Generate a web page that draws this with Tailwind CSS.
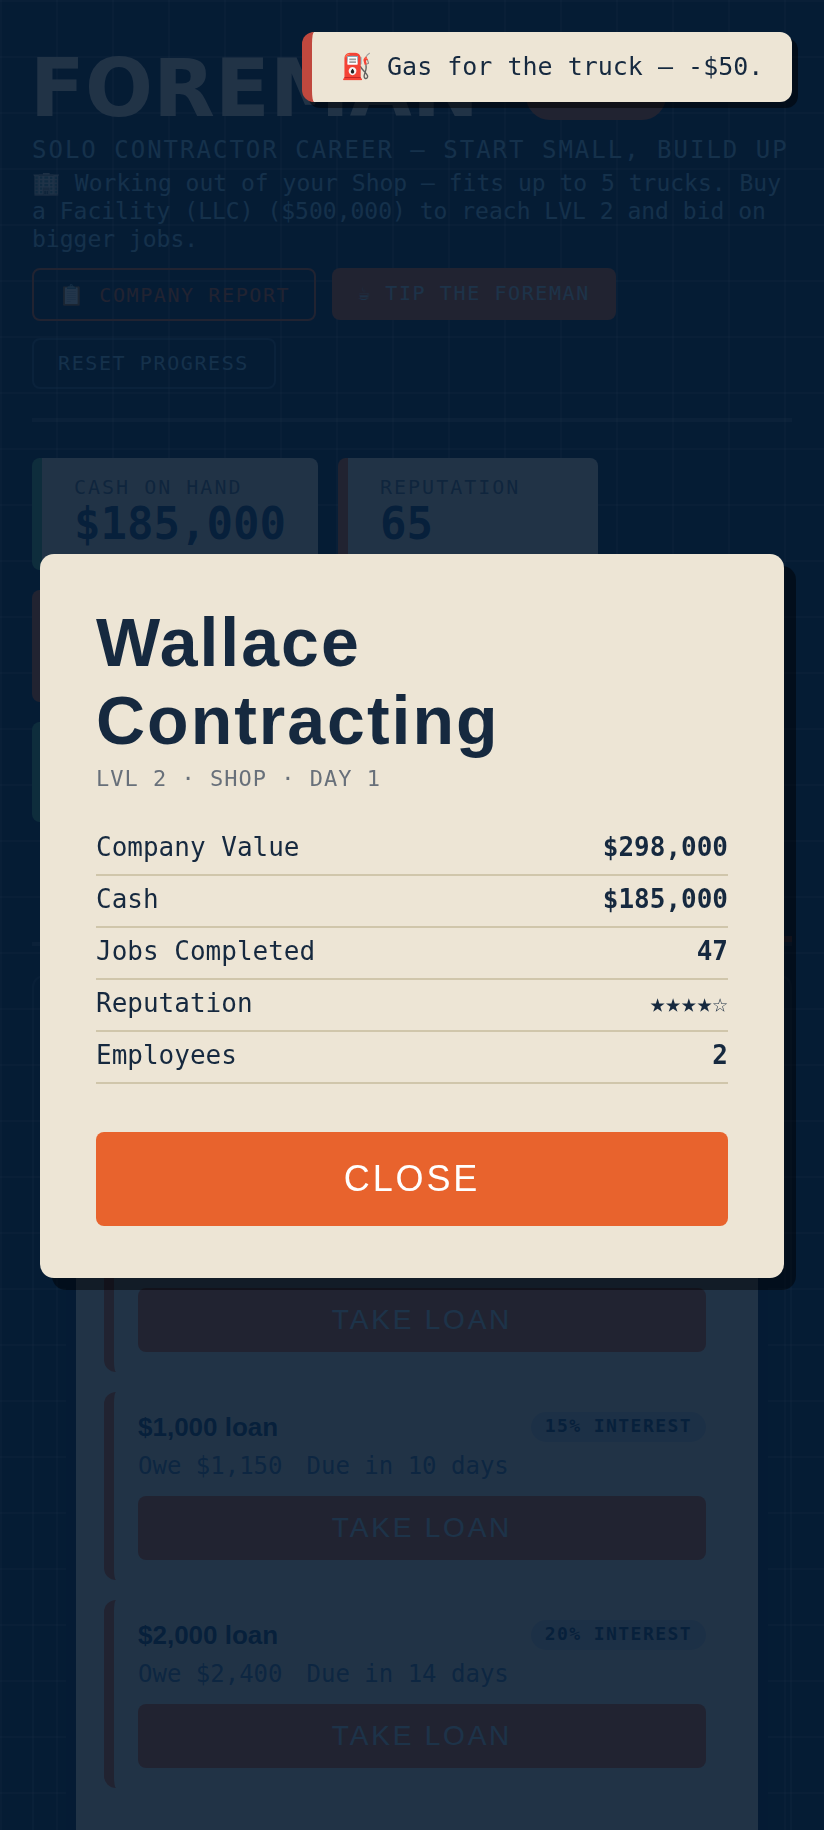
<!DOCTYPE html>
<html lang="en">
  <head>
    <meta charset="UTF-8" />
    <meta name="viewport" content="width=device-width, initial-scale=1.0" />
    <title>Foreman</title>
    <script src="https://cdn.jsdelivr.net/npm/@tailwindcss/browser@4"></script>
  </head>

  <body class="h-[1830px] overflow-hidden bg-[#0a2846] font-['DejaVu_Sans_Mono',monospace] text-[#8cd0fa]">
    <main class="h-[1830px] overflow-hidden px-8 pt-11 bg-[linear-gradient(rgba(255,255,255,0.13)_2px,transparent_2px),linear-gradient(90deg,rgba(255,255,255,0.13)_2px,transparent_2px)] bg-[size:56px_56px]">
      <!-- header -->
      <div class="flex items-center h-[90px]">
        <h1 class="-ml-[2px] font-['DejaVu_Sans',sans-serif] text-[80px] font-bold leading-[90px] tracking-[0.25px] text-[#efe6d6]">FOREMAN</h1>
        <div class="ml-[47px] w-[140px] h-[62px] rounded-3xl bg-[#e8622c]"></div>
      </div>
      <p class="mt-[2px] text-2xl leading-7 tracking-[2px] whitespace-nowrap">SOLO CONTRACTOR CAREER — START SMALL, BUILD UP</p>
      <p class="mt-[5px] text-[23px] leading-7">🏢 Working out of your Shop — fits up to 5 trucks. Buy a Facility (LLC) ($500,000) to reach LVL 2 and bid on bigger jobs.</p>

      <div class="flex flex-wrap items-start gap-x-4 gap-y-[17px] mt-[15px]">
        <button class="flex items-center w-[284px] h-[53px] pl-[25px] border-2 border-[#e8622c] rounded-lg text-xl tracking-[0.08em] text-[#e8622c] whitespace-nowrap">📋 COMPANY REPORT</button>
        <button class="flex items-center w-[284px] h-[52px] pl-[26px] pb-[3px] rounded-lg bg-[#e8622c] text-xl tracking-[0.08em] text-[#cfe0ea] whitespace-nowrap">☕ TIP THE FOREMAN</button>
        <button class="flex items-center w-[244px] h-[51px] px-6 pb-[2px] border-2 border-[#8cd0fa]/30 rounded-lg text-xl tracking-[0.08em] whitespace-nowrap">RESET PROGRESS</button>
      </div>

      <div class="h-1 mt-[29px] bg-white/20"></div>

      <!-- stats -->
      <div class="flex flex-col gap-5 mt-9">
        <div class="flex gap-5">
          <div class="w-[286px] h-[112px] pl-8 pt-[15px] border-l-[10px] border-[#50b780] rounded-lg bg-[#efe6d6]">
            <div class="text-xl leading-[29px] tracking-[0.1em] text-[#5f7388]">CASH ON HAND</div>
            <div class="text-[44px] font-bold leading-[44px] text-[#1a4a7a]">$185,000</div>
          </div>
          <div class="w-[260px] h-[112px] pl-8 pt-[15px] border-l-[10px] border-[#e8622c] rounded-lg bg-[#efe6d6]">
            <div class="text-xl leading-[29px] tracking-[0.1em] text-[#5f7388]">REPUTATION</div>
            <div class="text-[44px] font-bold leading-[44px] text-[#1a4a7a]">65</div>
          </div>
        </div>
        <div class="w-[286px] h-[112px] border-l-[10px] border-[#e8622c] rounded-lg bg-[#efe6d6]"></div>
        <div class="w-[286px] h-[100px] border-l-[10px] border-[#50b780] rounded-lg bg-[#efe6d6]"></div>
      </div>

      <div class="h-[6px] w-[300px] ml-auto mt-[114px] bg-[#e8622c]"></div>
      <div class="h-1 bg-white/20"></div>

      <!-- loans -->
      <section class="mt-[29px] h-[900px] border-2 border-white/15 rounded-xl">
        <div class="h-[900px] ml-[42px] mr-[32px] mt-5 px-7 pt-[187px] bg-[#efe6d6] shadow-[0_0_0_10px_#082440]">
          <div class="flex flex-col gap-5">
            <article class="h-[188px] pl-6 pr-6 pt-[104px] border-l-[10px] border-[#e8622c] rounded-xl">
              <button class="w-full h-16 rounded-lg bg-[#e8622c] font-['Liberation_Sans',sans-serif] text-[28px] tracking-[0.1em] text-[#cfe0ea]">TAKE LOAN</button>
            </article>
            <article class="h-[188px] pl-6 pr-6 pt-5 border-l-[10px] border-[#e8622c] rounded-xl">
              <div class="flex items-start justify-between">
                <h3 class="font-['Liberation_Sans',sans-serif] text-[26px] font-bold leading-[30px] text-[#1a4a7a]">$1,000 loan</h3>
                <span class="h-[30px] px-[14px] rounded-full bg-[#c4cbd0] text-lg font-bold leading-[28px] tracking-[0.08em] text-[#1a4a7a]">15% INTEREST</span>
              </div>
              <p class="flex gap-6 mt-[10px] text-2xl leading-7 text-[#4a7aa8]"><span>Owe $1,150</span><span>Due in 10 days</span></p>
              <button class="w-full h-16 mt-4 rounded-lg bg-[#e8622c] font-['Liberation_Sans',sans-serif] text-[28px] tracking-[0.1em] text-[#cfe0ea]">TAKE LOAN</button>
            </article>
            <article class="h-[188px] pl-6 pr-6 pt-5 border-l-[10px] border-[#e8622c] rounded-xl">
              <div class="flex items-start justify-between">
                <h3 class="font-['Liberation_Sans',sans-serif] text-[26px] font-bold leading-[30px] text-[#1a4a7a]">$2,000 loan</h3>
                <span class="h-[30px] px-[14px] rounded-full bg-[#c4cbd0] text-lg font-bold leading-[28px] tracking-[0.08em] text-[#1a4a7a]">20% INTEREST</span>
              </div>
              <p class="flex gap-6 mt-[10px] text-2xl leading-7 text-[#4a7aa8]"><span>Owe $2,400</span><span>Due in 14 days</span></p>
              <button class="w-full h-16 mt-4 rounded-lg bg-[#e8622c] font-['Liberation_Sans',sans-serif] text-[28px] tracking-[0.1em] text-[#cfe0ea]">TAKE LOAN</button>
            </article>
          </div>
        </div>
      </section>
    </main>

    <!-- company report modal -->
    <div class="fixed inset-0 z-40 flex items-center justify-center px-10 bg-[#051a32]/88">
      <div class="w-full mt-[2px] px-14 pt-[49px] pb-[52px] rounded-[14px] bg-[#ede5d5] text-[#16293f] shadow-[12px_12px_0_rgba(0,0,0,0.45)]">
        <h2 class="font-['Liberation_Sans',sans-serif] text-[68px] font-bold leading-[78px] tracking-[2px]">Wallace Contracting</h2>
        <p class="mt-[5px] text-[22px] leading-[30px] tracking-[1px] text-[#68707a]">LVL 2 · SHOP · DAY 1</p>
        <dl class="mt-[30px] text-[26px]">
          <div class="flex items-center justify-between h-[52px] pb-[3px] border-b-2 border-[#d0c6ab]"><dt>Company Value</dt><dd class="font-bold">$298,000</dd></div>
          <div class="flex items-center justify-between h-[52px] pb-[3px] border-b-2 border-[#d0c6ab]"><dt>Cash</dt><dd class="font-bold">$185,000</dd></div>
          <div class="flex items-center justify-between h-[52px] pb-[3px] border-b-2 border-[#d0c6ab]"><dt>Jobs Completed</dt><dd class="font-bold">47</dd></div>
          <div class="flex items-center justify-between h-[52px] pb-[3px] border-b-2 border-[#d0c6ab]"><dt>Reputation</dt><dd class="font-bold">★★★★☆</dd></div>
          <div class="flex items-center justify-between h-[52px] pb-[3px] border-b-2 border-[#d0c6ab]"><dt>Employees</dt><dd class="font-bold">2</dd></div>
        </dl>
        <button class="w-full h-[94px] mt-12 rounded-lg bg-[#e8632d] font-['Liberation_Sans',sans-serif] text-4xl tracking-[0.08em] text-white">CLOSE</button>
      </div>
    </div>

    <!-- toast -->
    <div class="fixed top-8 right-8 z-50 flex items-center w-[490px] h-[70px] pl-[29px] border-l-[10px] border-[#c0483e] rounded-xl bg-[#ede5d5] text-[25px] text-[#16293f] whitespace-nowrap shadow-[6px_6px_0_rgba(0,0,0,0.5)]">⛽ Gas for the truck — -$50.</div>
  </body>
</html>
